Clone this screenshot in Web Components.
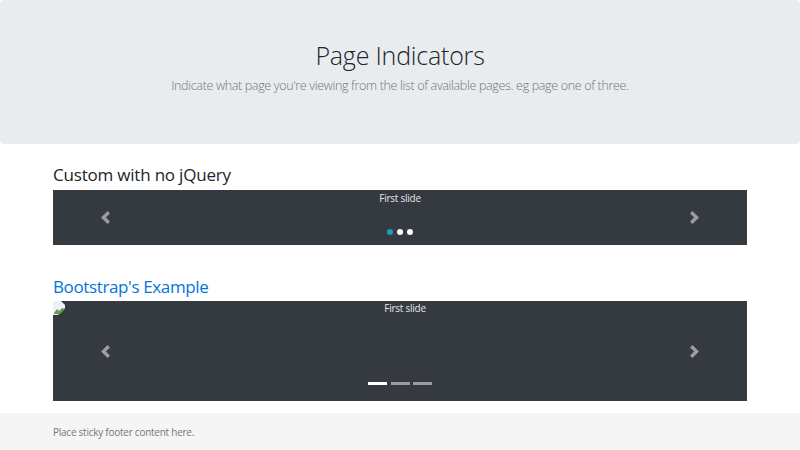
<!DOCTYPE html>
<html lang="en">
<head>
<meta charset="utf-8">
<title>Page Indicators</title>
<style>
  html, body { margin: 0; height: 100%; }
  body {
    display: flex;
    flex-direction: column;
    height: 450px;
    overflow: hidden;
    background: #fff;
    color: #212529;
    font-family: "Open Sans", "Noto Sans", sans-serif;
  }
  main { display: block; padding: 0 53px; }
  site-footer { margin-top: auto; }
</style>
</head>
<body>
<page-jumbotron heading="Page Indicators">Indicate what page you're viewing from the list of available pages. eg page one of three.</page-jumbotron>
<main>
  <section-block heading="Custom with no jQuery">
    <slide-carousel kind="dots" caption="First slide" style="height:55px"></slide-carousel>
  </section-block>
  <section-block heading="Bootstrap's Example" accent>
    <slide-carousel kind="bars" caption="First slide" broken style="height:100px"></slide-carousel>
  </section-block>
</main>
<site-footer>Place sticky footer content here.</site-footer>

<script>
class PageJumbotron extends HTMLElement {
  constructor() {
    super();
    var shadow = this.attachShadow({mode: 'open'});
    shadow.innerHTML = '<style>' +
    ':host { display: flex; flex-direction: column; align-items: center; justify-content: center; height: 144px; box-sizing: border-box; padding-bottom: 9px; background: #e9ecef; border-radius: 4px; }' +
    'h1 { margin: 0 0 7px; font-size: 25px; font-weight: 300; line-height: 29px; letter-spacing: -.2px; color: #212529; }' +
    'p { margin: 0; font-size: 12.5px; font-weight: 300; line-height: 18px; letter-spacing: -.33px; color: #6c757d; }' +
    '</style><h1></h1><p><slot></slot></p>';
    shadow.querySelector('h1').textContent = this.getAttribute('heading');
  }
}

class SectionBlock extends HTMLElement {
  constructor() {
    super();
    var shadow = this.attachShadow({mode: 'open'});
    shadow.innerHTML = '<style>' +
    ':host { display: block; padding-top: 20px; }' +
    ':host([accent]) { padding-top: 31px; }' +
    'h2 { margin: 0 0 4px; font-size: 17px; font-weight: 400; line-height: 22px; letter-spacing: -.2px; color: #212529; }' +
    ':host([accent]) h2 { margin-bottom: 3px; color: #0275d8; letter-spacing: -.37px; }' +
    '</style><h2></h2><slot></slot>';
    shadow.querySelector('h2').textContent = this.getAttribute('heading');
  }
}

var CHEVRON_LEFT = 'M5.25 0l-4 4 4 4 1.5-1.5-2.5-2.5 2.5-2.5-1.5-1.5z';
var CHEVRON_RIGHT = 'M2.75 0l-1.5 1.5 2.5 2.5-2.5 2.5 1.5 1.5 4-4-4-4z';

class SlideCarousel extends HTMLElement {
  constructor() {
    super();
    var shadow = this.attachShadow({mode: 'open'});
    var kind = this.getAttribute('kind');
    var broken = this.hasAttribute('broken');

    var marks = '';
    for (var i = 0; i < 3; i++) {
      marks += '<li class="' + (i == 0 ? 'active' : '') + '"></li>';
    }

    // Missing image placeholder in the corner of the second carousel
    var brokenIcon = broken ? '<svg class="broken" width="12" height="14" viewBox="0 0 12 14">' +
      '<path d="M0 0h8l4 4v3L6 13l-1 1H0z" fill="#eef1f5"/>' +
      '<path d="M1 12l3-4 2 2 3-3 3 1-5 5H1z" fill="#5f9e58"/></svg>' : '';

    shadow.innerHTML = '<style>' +
    ':host { display: block; position: relative; background: #343a40; overflow: hidden; }' +
    '.caption { display: flex; justify-content: center; padding-top: 1px; font-size: 10px; line-height: 15px; letter-spacing: -.25px; color: #e4e5e6; }' +
    ':host([broken]) .caption { padding-top: 0; padding-left: 10px; }' +
    '.broken { position: absolute; left: 0; top: 0; }' +
    '.ctl { position: absolute; top: 0; bottom: 0; width: 15%; display: flex; align-items: center; justify-content: center; opacity: .5; }' +
    '.prev { left: 0; } .next { right: 0; }' +
    'ol { position: absolute; left: 0; right: 0; margin: 0; padding: 0; list-style: none; display: flex; justify-content: center; }' +
    'ol.dots { bottom: 10px; gap: 4px; }' +
    'ol.dots li { width: 6px; height: 6px; border-radius: 50%; background: #fff; }' +
    'ol.dots li.active { background: #17a2b8; }' +
    'ol.bars { bottom: 16px; gap: 3.5px; }' +
    'ol.bars li { width: 19px; height: 3px; background: #fff; opacity: .5; }' +
    'ol.bars li.active { opacity: 1; }' +
    '</style>' +
    brokenIcon +
    '<div class="caption"></div>' +
    '<ol class="' + kind + '">' + marks + '</ol>' +
    '<div class="ctl prev"><svg width="13" height="13" viewBox="0 0 8 8"><path fill="#fff" d="' + CHEVRON_LEFT + '"/></svg></div>' +
    '<div class="ctl next"><svg width="13" height="13" viewBox="0 0 8 8"><path fill="#fff" d="' + CHEVRON_RIGHT + '"/></svg></div>';
    shadow.querySelector('.caption').textContent = this.getAttribute('caption');
  }
}

class SiteFooter extends HTMLElement {
  constructor() {
    super();
    var shadow = this.attachShadow({mode: 'open'});
    shadow.innerHTML = '<style>' +
    ':host { display: flex; align-items: center; height: 37px; box-sizing: border-box; padding: 0 53px; background: #f5f5f5; color: #777; font-size: 10px; letter-spacing: -.25px; }' +
    '</style><slot></slot>';
  }
}

window.customElements.define('page-jumbotron', PageJumbotron);
window.customElements.define('section-block', SectionBlock);
window.customElements.define('slide-carousel', SlideCarousel);
window.customElements.define('site-footer', SiteFooter);
</script>
</body>
</html>
